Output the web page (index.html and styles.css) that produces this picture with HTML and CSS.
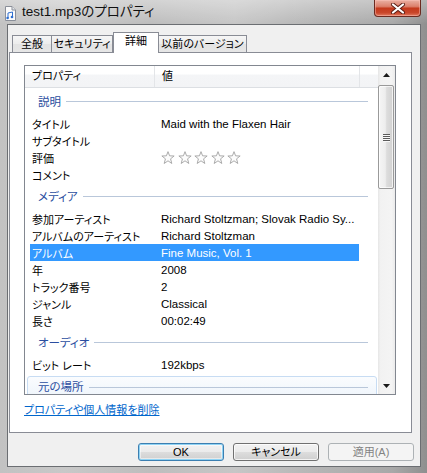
FILE: index.html
```html
<!DOCTYPE html>
<html lang="ja">
<head>
<meta charset="utf-8">
<title>test1.mp3のプロパティ</title>
<link rel="stylesheet" href="styles.css">
</head>
<body>
<div class="window">
  <div class="titlebar">
    <svg class="app-icon" width="11" height="15" viewBox="0 0 11 15">
      <path d="M0.5 0.5 H7 L10.5 4 V14.5 H0.5 Z" fill="#fbfbfb" stroke="#8a8f99"/>
      <path d="M7 0.5 V4 H10.5" fill="#e4e6ea" stroke="#8a8f99"/>
      <path d="M3 12 V7 L7.5 6 V11" fill="none" stroke="#2f6fd0" stroke-width="1"/>
      <circle cx="2.6" cy="12" r="1.3" fill="#2f6fd0"/>
      <circle cx="7" cy="11" r="1.3" fill="#2f6fd0"/>
    </svg>
    <span class="title">test1.mp3のプロパティ</span>
    <div class="close">
      <svg width="16" height="11" viewBox="0 0 16 11">
        <path d="M3 1.5 L13 9.5 M13 1.5 L3 9.5" stroke="#5a1d14" stroke-width="4" stroke-linecap="round"/>
        <path d="M3 1.5 L13 9.5 M13 1.5 L3 9.5" stroke="#ffffff" stroke-width="2.2" stroke-linecap="round"/>
      </svg>
    </div>
  </div>
  <div class="client">
    <div class="tabs">
      <div class="tab t1">全般</div>
      <div class="tab t2">セキュリティ</div>
      <div class="tab t3 active">詳細</div>
      <div class="tab t4">以前のバージョン</div>
    </div>
    <div class="panel">
      <div class="listview">
        <div class="lv-content">
          <div class="lv-header">
            <div class="hcol hname">プロパティ</div>
            <div class="hcol hvalue">値</div>
            <div class="hcol hrest"></div>
          </div>
          <div class="lv-body">
            <div class="group"><span class="gtext">説明</span><span class="gline"></span></div>
            <div class="row"><span class="name">タイトル</span><span class="value">Maid with the Flaxen Hair</span></div>
            <div class="row"><span class="name">サブタイトル</span><span class="value"></span></div>
            <div class="row"><span class="name">評価</span>
              <span class="value stars">
                <svg class="star" viewBox="0 0 13 13"><polygon points="6.5,0.6 7.97,4.48 12.2,4.65 8.88,7.27 10.03,11.6 6.5,9.1 2.97,11.6 4.12,7.27 0.8,4.65 5.03,4.48"/></svg>
                <svg class="star" viewBox="0 0 13 13"><polygon points="6.5,0.6 7.97,4.48 12.2,4.65 8.88,7.27 10.03,11.6 6.5,9.1 2.97,11.6 4.12,7.27 0.8,4.65 5.03,4.48"/></svg>
                <svg class="star" viewBox="0 0 13 13"><polygon points="6.5,0.6 7.97,4.48 12.2,4.65 8.88,7.27 10.03,11.6 6.5,9.1 2.97,11.6 4.12,7.27 0.8,4.65 5.03,4.48"/></svg>
                <svg class="star" viewBox="0 0 13 13"><polygon points="6.5,0.6 7.97,4.48 12.2,4.65 8.88,7.27 10.03,11.6 6.5,9.1 2.97,11.6 4.12,7.27 0.8,4.65 5.03,4.48"/></svg>
                <svg class="star" viewBox="0 0 13 13"><polygon points="6.5,0.6 7.97,4.48 12.2,4.65 8.88,7.27 10.03,11.6 6.5,9.1 2.97,11.6 4.12,7.27 0.8,4.65 5.03,4.48"/></svg>
              </span>
            </div>
            <div class="row"><span class="name">コメント</span><span class="value"></span></div>
            <div class="group"><span class="gtext">メディア</span><span class="gline"></span></div>
            <div class="row"><span class="name">参加アーティスト</span><span class="value">Richard Stoltzman; Slovak Radio Sy...</span></div>
            <div class="row"><span class="name">アルバムのアーティスト</span><span class="value">Richard Stoltzman</span></div>
            <div class="row selected"><span class="name">アルバム</span><span class="value">Fine Music, Vol. 1</span></div>
            <div class="row"><span class="name">年</span><span class="value">2008</span></div>
            <div class="row"><span class="name">トラック番号</span><span class="value">2</span></div>
            <div class="row"><span class="name">ジャンル</span><span class="value">Classical</span></div>
            <div class="row"><span class="name">長さ</span><span class="value">00:02:49</span></div>
            <div class="group"><span class="gtext">オーディオ</span><span class="gline"></span></div>
            <div class="row"><span class="name">ビット レート</span><span class="value">192kbps</span></div>
            <div class="group hot"><span class="gtext">元の場所</span><span class="gline"></span></div>
          </div>
        </div>
        <div class="scrollbar">
          <div class="sb-btn">
            <svg width="7" height="4" viewBox="0 0 7 4"><polygon points="3.5,0 7,4 0,4" fill="#1a1a1a"/></svg>
          </div>
          <div class="sb-thumb">
            <span class="grip"></span><span class="grip"></span><span class="grip"></span><span class="grip"></span>
          </div>
          <div class="sb-btn down">
            <svg width="7" height="4" viewBox="0 0 7 4"><polygon points="0,0 7,0 3.5,4" fill="#1a1a1a"/></svg>
          </div>
        </div>
      </div>
      <a class="link" href="#">プロパティや個人情報を削除</a>
    </div>
    <div class="buttons">
      <div class="btn default">OK</div>
      <div class="btn">キャンセル</div>
      <div class="btn disabled">適用(A)</div>
    </div>
  </div>
</div>
</body>
</html>
```
FILE: styles.css
```css
* { box-sizing: border-box; }
html, body { margin: 0; padding: 0; }
body {
  width: 427px;
  height: 473px;
  overflow: hidden;
  background: #9c9c9c;
  font-family: "Liberation Sans", "Noto Sans CJK JP", sans-serif;
  font-size: 11px;
  color: #000;
  font-feature-settings: "palt";
}
.window {
  width: 427px;
  height: 473px;
  display: flex;
  flex-direction: column;
  background:
    linear-gradient(to bottom, rgba(255,255,255,0.35), rgba(255,255,255,0) 24px),
    linear-gradient(to right, #c2c2c2 0, #c8c8c8 15%, #bdbdbd 35%, #c6c6c6 55%, #b4b4b4 75%, #a8a8a8 92%, #8f8f8f 100%);
}

/* title bar */
.titlebar {
  height: 24px;
  display: flex;
  align-items: flex-start;
  flex: none;
}
.app-icon { margin: 6px 0 0 5px; flex: none; }
.title {
  margin: 3px 0 0 6px;
  font-size: 13.5px;
  line-height: 18px;
  color: #111;
}
.close {
  margin-left: auto;
  margin-right: 6px;
  width: 47px;
  height: 17px;
  border: 1px solid #6b2a20;
  border-top: none;
  border-radius: 0 0 4px 4px;
  background: linear-gradient(to bottom, #eab0a3 0, #dc806c 40%, #c4391c 52%, #c9462a 80%, #e37b62 100%);
  display: flex;
  align-items: center;
  justify-content: center;
  box-shadow: inset 0 0 0 1px rgba(255,200,190,0.45);
}

/* client */
.client {
  flex: 1;
  margin: 0 6px 6px 7px;
  border: 1px solid #6b6e72;
  background: #f0f0f0;
  display: flex;
  flex-direction: column;
}
.tabs {
  height: 27px;
  flex: none;
  display: flex;
  align-items: flex-end;
  padding-left: 4px;
}
.tab {
  height: 17px;
  border: 1px solid #898c95;
  border-bottom: none;
  background: linear-gradient(to bottom, #f6f6f6 0, #ececec 50%, #e3e3e3 51%, #e6e6e6 100%);
  text-align: center;
  line-height: 16px;
  white-space: nowrap;
  color: #000;
}
.t1 { width: 40px; }
.t2 { width: 62px; margin-left: -1px; }
.t3 { width: 46px; }
.t4 { width: 89px; margin-left: -1px; }
.tab.active {
  height: 21px;
  margin-bottom: -1px;
  background: #ffffff;
  line-height: 17px;
  position: relative;
  z-index: 1;
}

.panel {
  flex: none;
  height: 381px;
  margin: 0 8px 0 1px;
  border: 1px solid #898c95;
  background: #ffffff;
  padding: 12px 0 0 14px;
  display: flex;
  flex-direction: column;
}

/* list view */
.listview {
  width: 372px;
  height: 330px;
  border: 1px solid #828790;
  display: flex;
  background: #fff;
  flex: none;
}
.lv-content {
  flex: 1;
  display: flex;
  flex-direction: column;
  overflow: hidden;
}
.lv-header {
  height: 22px;
  flex: none;
  display: flex;
  border-bottom: 1px solid #dcdfe3;
  background: linear-gradient(to bottom, #ffffff 0, #ffffff 40%, #f4f5f7 41%, #f3f4f6 100%);
}
.hcol {
  line-height: 21px;
  padding-left: 7px;
  white-space: nowrap;
}
.hname { width: 130px; border-right: 1px solid #e3e5e8; }
.hvalue { width: 205px; border-right: 1px solid #e3e5e8; }
.hrest { flex: 1; }

.lv-body { flex: 1; overflow: hidden; }
.group {
  height: 27px;
  display: flex;
  align-items: center;
  padding-left: 13px;
  padding-right: 10px;
}
.gtext {
  color: #2b4ea0;
  line-height: 16px;
  font-size: 11.5px;
  white-space: nowrap;
}
.gline {
  flex: 1;
  height: 1px;
  margin-left: 5px;
  background: #b9c7da;
}
.group.hot {
  height: 24px;
  margin: 3px 1px 0 2px;
  padding-left: 10px;
  padding-right: 8px;
  border: 1px solid #c7dcf3;
  border-radius: 3px;
  background: linear-gradient(to bottom, #fafcfe, #eef4fb);
  align-items: flex-start;
  padding-top: 2px;
}
.group.hot .gline { margin-top: 8px; }

.row {
  height: 17px;
  width: 329px;
  margin-left: 5px;
  display: flex;
  align-items: center;
  white-space: nowrap;
}
.row .name { width: 131px; padding-left: 2px; flex: none; }
.row .value { flex: 1; font-size: 11.5px; overflow: hidden; }
.row.selected { background: #3399ff; color: #ffffff; }
.stars { display: flex; gap: 2.5px; align-items: center; }
.star { width: 14px; height: 14px; fill: #fcfcfc; stroke: #a8a8a8; stroke-width: 0.9; stroke-linejoin: round; }

/* scrollbar */
.scrollbar {
  width: 17px;
  flex: none;
  display: flex;
  flex-direction: column;
  background: linear-gradient(to right, #e6e6e6 0, #f2f2f2 15%, #f4f4f4 80%, #ebebeb 100%);
}
.sb-btn {
  height: 17px;
  flex: none;
  display: flex;
  align-items: center;
  justify-content: center;
}
.sb-btn.down { margin-top: auto; }
.sb-thumb {
  height: 104px;
  margin: 2px 1px 0 0;
  border: 1px solid #9a9a9a;
  border-radius: 2px;
  background: linear-gradient(to right, #f5f5f5 0, #ededed 45%, #dcdcdc 55%, #d2d2d2 100%);
  box-shadow: inset 0 0 0 1px rgba(255,255,255,0.7);
  display: flex;
  flex-direction: column;
  align-items: center;
  justify-content: center;
  gap: 1px;
}
.grip {
  width: 7px;
  height: 1px;
  background: #5a5a5a;
  box-shadow: 0 1px 0 #f8f8f8;
}

.link {
  margin-top: 8px;
  color: #0066cc;
  text-decoration: underline;
  line-height: 15px;
  align-self: flex-start;
}

/* buttons */
.buttons {
  margin-top: 10px;
  height: 18px;
  flex: none;
  display: flex;
  justify-content: flex-end;
  gap: 9px;
  padding-right: 6px;
}
.btn {
  width: 86px;
  height: 18px;
  border: 1px solid #707070;
  border-radius: 3px;
  background: linear-gradient(to bottom, #f2f2f2 0, #ebebeb 50%, #dddddd 51%, #cfcfcf 100%);
  box-shadow: inset 0 0 0 1px rgba(255,255,255,0.75);
  text-align: center;
  line-height: 16px;
  color: #000;
}
.btn.default {
  border-color: #3c7fb1;
  box-shadow: inset 0 0 0 1px #8fd3f4, inset 0 0 0 2px rgba(255,255,255,0.5);
}
.btn.disabled {
  border-color: #adb2b5;
  background: #f4f4f4;
  box-shadow: none;
  color: #838383;
}
```
